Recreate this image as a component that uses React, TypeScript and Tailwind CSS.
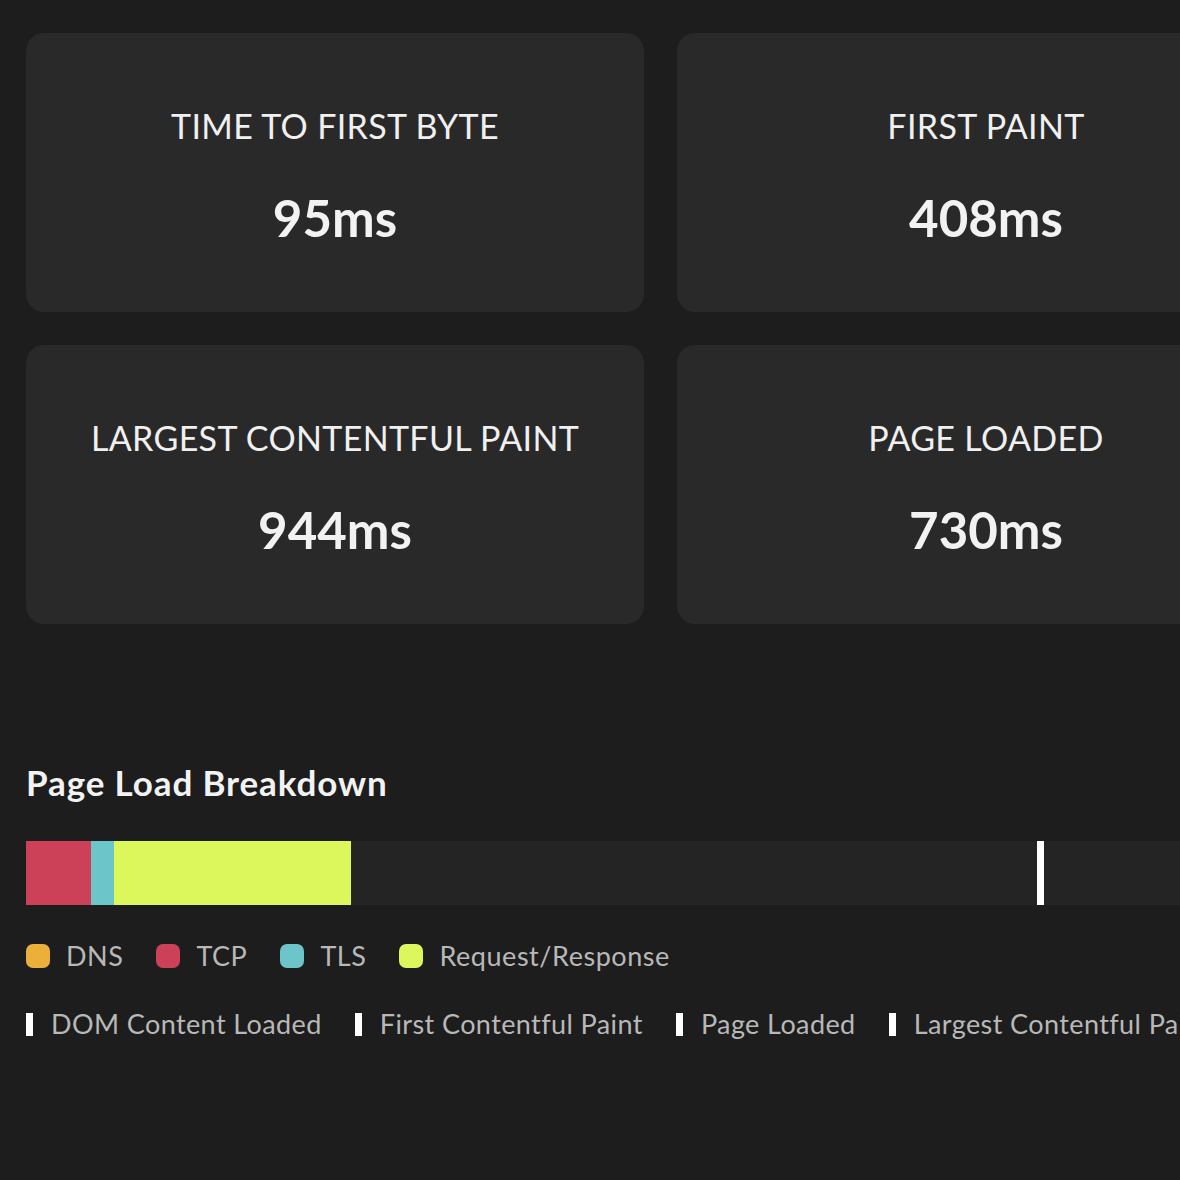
import React from 'react';

interface Metric {
  label: string;
  value: string;
}

const metrics: Metric[] = [
  { label: 'Time to First Byte', value: '95ms' },
  { label: 'First Paint', value: '408ms' },
  { label: 'Largest Contentful Paint', value: '944ms' },
  { label: 'Page Loaded', value: '730ms' },
];

// widths in px on the breakdown bar
const phases = [
  { label: 'DNS', color: 'bg-[#ebb03a]', width: 0 },
  { label: 'TCP', color: 'bg-[#cc4058]', width: 65 },
  { label: 'TLS', color: 'bg-[#6bc5c9]', width: 23 },
  { label: 'Request/Response', color: 'bg-[#dcf75c]', width: 237 },
];

const markers = ['DOM Content Loaded', 'First Contentful Paint', 'Page Loaded', 'Largest Contentful Paint'];

const MetricCard: React.FC<Metric> = ({ label, value }) => (
  <div className="flex h-[279px] flex-col items-center justify-center gap-[44px] rounded-[18px] bg-[#292929] pt-[6px]">
    <div className="text-[34px] leading-[40px] font-normal uppercase tracking-[0.01em] text-[#f0f0f0]">
      {label}
    </div>
    <div className="text-[51px] leading-[56px] font-bold text-[#f2f2f2]">{value}</div>
  </div>
);

export default function App() {
  return (
    <div
      className="min-h-screen w-full overflow-hidden bg-[#1d1d1d]"
      style={{ fontFamily: 'Lato, "Noto Sans", sans-serif' }}
    >
      <div className="w-[1321px] px-[26px] pt-[33px] pb-[120px]">
        {/* Metric cards */}
        <div className="grid grid-cols-2 gap-[33px]">
          {metrics.map((m) => (
            <MetricCard key={m.label} {...m} />
          ))}
        </div>

        {/* Breakdown */}
        <h2 className="mt-[138px] text-[35px] leading-[40px] font-bold tracking-[0.025em] text-[#f2f2f2]">
          Page Load Breakdown
        </h2>

        <div className="relative mt-[39px] flex h-[64px] w-full bg-[#242424]">
          {phases.map((p) => (
            <div key={p.label} className={`${p.color} h-full`} style={{ width: p.width }} />
          ))}
          <div className="absolute top-0 left-[1011px] h-full w-[7px] bg-white" />
        </div>

        <div className="mt-[35px] flex items-center gap-[33px]">
          {phases.map((p) => (
            <div key={p.label} className="flex items-center gap-[16px]">
              <span className={`${p.color} h-[24px] w-[24px] rounded-[7px]`} />
              <span className="text-[27px] leading-[32px] tracking-[0.02em] text-[#b8b8b8]">{p.label}</span>
            </div>
          ))}
        </div>

        <div className="mt-[36px] flex items-center gap-[33px] whitespace-nowrap">
          {markers.map((m) => (
            <div key={m} className="flex items-center gap-[18px]">
              <span className="h-[23px] w-[7px] bg-white" />
              <span className="text-[27px] leading-[32px] tracking-[0.015em] text-[#b8b8b8]">{m}</span>
            </div>
          ))}
        </div>
      </div>
    </div>
  );
}
